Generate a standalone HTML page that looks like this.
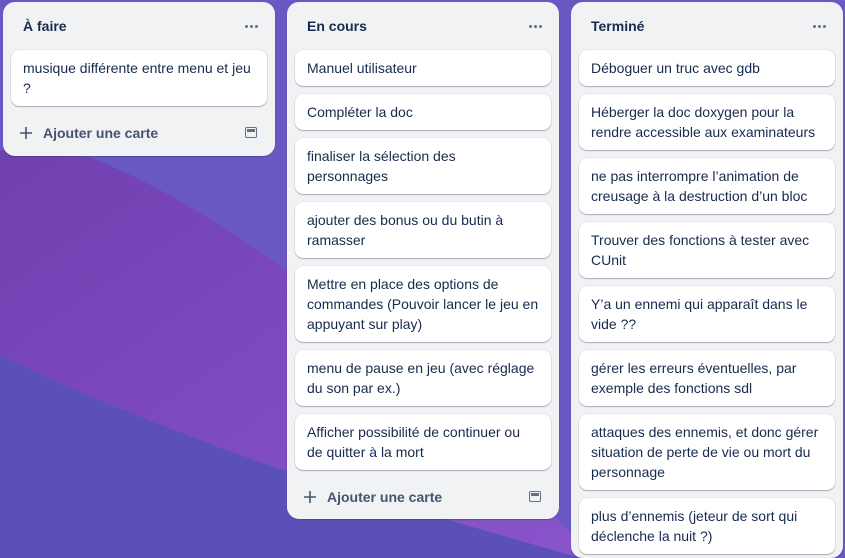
<!DOCTYPE html>
<html><head><meta charset="utf-8"><style>
*{box-sizing:border-box;margin:0;padding:0}
html,body{width:845px;height:558px;overflow:hidden}
body{position:relative;font-family:"Liberation Sans",sans-serif;background:#6a5ac4}
svg.bg{position:absolute;left:0;top:0}
.list{position:absolute;top:2px;width:272px;background:#f1f2f4;border-radius:12px;box-shadow:0 1px 1px rgba(9,30,66,.25);overflow:hidden}
.hdr{height:48px;position:relative}
.hdr h2{position:absolute;left:20px;top:16px;font-size:14px;font-weight:bold;color:#172b4d}
.dots{position:absolute;right:17px;top:23px;display:flex;gap:2px}
.dots i{width:3px;height:3px;border-radius:50%;background:#626f86;display:block}
.card{margin:0 8px 8px;background:#fff;border-radius:8px;box-shadow:0 1px 1px rgba(9,30,66,.3),0 0 1px rgba(9,30,66,.3);padding:8px 12px;font-size:14px;line-height:20px;color:#172b4d}
.add{height:40px;position:relative;font-size:14px;font-weight:bold;color:#44546f}
.add svg.p{position:absolute;left:17px;top:13px}
.add span.t{position:absolute;left:40px;top:11px}
.add .ic{position:absolute;right:18px;top:13px;width:12px;height:11px;border:1.5px solid #626f86;border-radius:2px}
.add .ic:after{content:"";position:absolute;left:1px;right:1px;top:1px;height:3px;background:#626f86}
</style></head><body>
<svg class="bg" width="845" height="558">
<defs><linearGradient id="g" x1="0" y1="0" x2="1" y2="1"><stop offset="0" stop-color="#7040b0"/><stop offset="1" stop-color="#8a55cc"/></linearGradient></defs>
<rect width="845" height="558" fill="#6a58c2"/>
<path d="M0 150 L90 157 C170 190 230 230 300 280 L600 560 L580 558 C450 520 300 480 200 440 C120 410 50 380 0 355 Z" fill="url(#g)"/>
<path d="M0 355 C50 380 120 410 200 440 C300 480 450 520 580 558 L0 558 Z" fill="#5b50b8"/>
</svg>

<div class="list" style="left:3px;height:154px">
<div class="hdr"><h2>À faire</h2><div class="dots"><i></i><i></i><i></i></div></div>
<div class="card">musique différente entre menu et jeu ?</div>
<div class="add"><svg class="p" width="12" height="12"><path d="M6 0V12M0 6H12" stroke="#44546f" stroke-width="1.6"/></svg><span class="t">Ajouter une carte</span><span class="ic"></span></div>
</div>

<div class="list" style="left:287px;height:517px">
<div class="hdr"><h2>En cours</h2><div class="dots"><i></i><i></i><i></i></div></div>
<div class="card">Manuel utilisateur</div>
<div class="card">Compléter la doc</div>
<div class="card">finaliser la sélection des personnages</div>
<div class="card">ajouter des bonus ou du butin à ramasser</div>
<div class="card">Mettre en place des options de commandes (Pouvoir lancer le jeu en appuyant sur play)</div>
<div class="card">menu de pause en jeu (avec réglage du son par ex.)</div>
<div class="card">Afficher possibilité de continuer ou de quitter à la mort</div>
<div class="add"><svg class="p" width="12" height="12"><path d="M6 0V12M0 6H12" stroke="#44546f" stroke-width="1.6"/></svg><span class="t">Ajouter une carte</span><span class="ic"></span></div>
</div>

<div class="list" style="left:571px;height:556px">
<div class="hdr"><h2>Terminé</h2><div class="dots"><i></i><i></i><i></i></div></div>
<div class="card">Déboguer un truc avec gdb</div>
<div class="card">Héberger la doc doxygen pour la rendre accessible aux examinateurs</div>
<div class="card">ne pas interrompre l’animation de creusage à la destruction d’un bloc</div>
<div class="card">Trouver des fonctions à tester avec CUnit</div>
<div class="card">Y’a un ennemi qui apparaît dans le vide ??</div>
<div class="card">gérer les erreurs éventuelles, par exemple des fonctions sdl</div>
<div class="card">attaques des ennemis, et donc gérer situation de perte de vie ou mort du personnage</div>
<div class="card">plus d’ennemis (jeteur de sort qui déclenche la nuit ?)</div>
</div>
</body></html>
